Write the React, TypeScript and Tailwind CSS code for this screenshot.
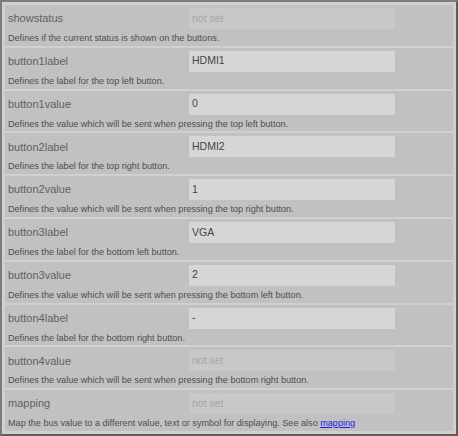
const rows: { name: string; value: string; desc: string; link?: string }[] = [
  { name: 'showstatus', value: '', desc: 'Defines if the current status is shown on the buttons.' },
  { name: 'button1label', value: 'HDMI1', desc: 'Defines the label for the top left button.' },
  { name: 'button1value', value: '0', desc: 'Defines the value which will be sent when pressing the top left button.' },
  { name: 'button2label', value: 'HDMI2', desc: 'Defines the label for the top right button.' },
  { name: 'button2value', value: '1', desc: 'Defines the value which will be sent when pressing the top right button.' },
  { name: 'button3label', value: 'VGA', desc: 'Defines the label for the bottom left button.' },
  { name: 'button3value', value: '2', desc: 'Defines the value which will be sent when pressing the bottom left button.' },
  { name: 'button4label', value: '-', desc: 'Defines the label for the bottom right button.' },
  { name: 'button4value', value: '', desc: 'Defines the value which will be sent when pressing the bottom right button.' },
  {
    name: 'mapping',
    value: '',
    desc: 'Map the bus value to a different value, text or symbol for displaying. See also ',
    link: 'mapping',
  },
];

export default function App() {
  return (
    <div className="w-[458px] h-[436px] border-2 border-t-[#7c7c7c] border-l-[#7c7c7c] border-r-[#5e5e5e] border-b-[#5e5e5e] bg-[#d0d0d0] p-[3px] flex flex-col gap-[2px] font-['Liberation_Sans',Arial,sans-serif]">
      {rows.map((r) => (
        <div key={r.name} className="flex-1 bg-[#c1c1c1] flex flex-col pl-[3px]">
          <div className="flex items-center pt-[3px]">
            <span className="w-[181px] text-[11px] text-[#606060]">{r.name}</span>
            <div
              className={
                'w-[206px] h-[21px] flex items-center px-[3px] text-[10.5px] ' +
                (r.value ? 'bg-[#d6d6d6] text-[#454545]' : 'bg-[#c8c8c8] text-[#a6a6a6]')
              }
            >
              {r.value || 'not set'}
            </div>
          </div>
          <div className="mt-[3px] text-[9.1px] leading-[12px] text-[#4e4e4e]">
            {r.desc}
            {r.link && <a className="text-[#1a1aee] underline" href="#">{r.link}</a>}
          </div>
        </div>
      ))}
    </div>
  );
}
